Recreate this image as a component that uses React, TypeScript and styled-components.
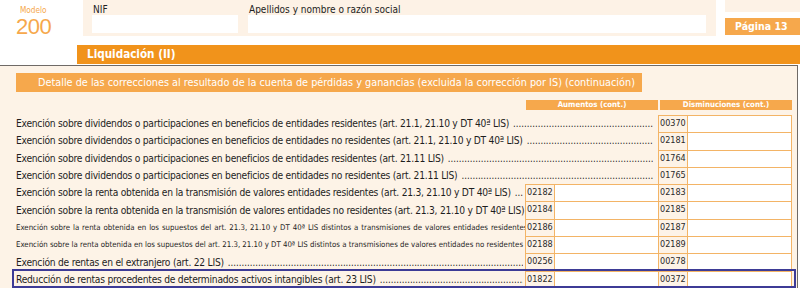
import React from "react";
import styled, { createGlobalStyle } from "styled-components";

const Global = createGlobalStyle`
  html, body { margin: 0; padding: 0; background: #ffffff; }
  body { font-family: "DejaVu Sans Condensed", "DejaVu Sans", "Liberation Sans", sans-serif; }
  * { box-sizing: border-box; }
`;

const ORANGE = "#f1931b";
const LIGHT_ORANGE = "#f6a84c";
const PEACH = "#fdf3e7";
const BOX_BORDER = "#f3b466";
const ROW_H = 17.3;

const Page = styled.div`
  width: 800px;
  height: 288px;
  overflow: hidden;
  background: #fff;
  position: relative;
`;

const Top = styled.div`
  display: grid;
  grid-template-columns: 83px 633px 9px 75px;
  height: 45px;
`;

const ModelBox = styled.div`
  display: flex;
  flex-direction: column;
  align-items: flex-start;
  padding-left: 16px;
  padding-top: 5px;
  color: ${LIGHT_ORANGE};
`;

const ModelLabel = styled.div`
  font-size: 8.2px;
  line-height: 10px;
  padding-left: 4px;
`;

const ModelNumber = styled.div`
  font-family: "Liberation Sans", Arial, sans-serif;
  font-size: 22px;
  line-height: 22px;
  font-weight: 300;
  letter-spacing: -0.5px;
  margin-top: 1px;
`;

const IdPanel = styled.div`
  height: 36px;
  background: #fdf2e6;
  display: grid;
  grid-template-columns: 146px 458px;
  column-gap: 10px;
  padding: 4px 0 0 9px;
`;

const Field = styled.div`
  display: flex;
  flex-direction: column;
`;

const FieldLabel = styled.div`
  font-size: 10px;
  line-height: 11px;
  color: #222;
  padding-left: 1px;
`;

const FieldInput = styled.div`
  background: #fff;
  height: 18px;
`;

const RightCol = styled.div`
  grid-column: 4;
  display: flex;
  flex-direction: column;
  gap: 6px;
`;

const FadedBox = styled.div`
  height: 12px;
  background: #fdf2e6;
`;

const PageTag = styled.div`
  height: 17px;
  background: ${LIGHT_ORANGE};
  color: #fff;
  font-weight: bold;
  font-size: 10.5px;
  line-height: 17px;
  padding-left: 10px;
`;

const SectionBar = styled.div`
  margin-left: 77px;
  height: 19px;
  background: ${ORANGE};
  color: #fff;
  font-weight: bold;
  font-size: 11.6px;
  line-height: 19px;
  padding-left: 10px;
`;

const Frame = styled.div`
  margin-top: 1px;
  width: 798px;
  height: 240px;
  border-top: 1px solid #6f6a66;
  border-right: 1px solid #6f6a66;
  background: ${PEACH};
  padding: 7px 5px 0 0;
`;

const DetailBar = styled.div`
  margin-left: 16px;
  width: 626px;
  height: 19px;
  background: ${LIGHT_ORANGE};
  color: #fff;
  font-size: 10.8px;
  line-height: 19px;
  padding-left: 22px;
  white-space: nowrap;
`;

const Table = styled.div`
  margin-top: 8px;
  display: grid;
  grid-template-columns: 1fr 133px 133px;
  padding-left: 16px;
`;

const ColHead = styled.div<{ $col: number }>`
  grid-column: ${(p) => p.$col};
  height: 10px;
  margin-left: ${(p) => (p.$col === 3 ? "1px" : "0")};
  margin-right: ${(p) => (p.$col === 2 ? "1px" : "0")};
  background: ${LIGHT_ORANGE};
  color: #fff;
  font-weight: bold;
  font-size: 7.8px;
  line-height: 10px;
  text-align: center;
  margin-bottom: 5px;
`;

const Label = styled.div<{ $wide: boolean; $small: boolean; $words: number }>`
  grid-column: ${(p) => (p.$wide ? "1 / 3" : "1")};
  height: ${ROW_H}px;
  display: flex;
  align-items: center;
  overflow: hidden;
  white-space: nowrap;
  font-size: ${(p) => (p.$small ? "7.8px" : "10.2px")};
  letter-spacing: ${(p) => (p.$small ? "0" : "-0.25px")};
  word-spacing: ${(p) => p.$words}px;
  color: #1e1e1e;
  padding-right: ${(p) => (p.$wide ? "6px" : "3px")};
`;

const LabelText = styled.span`
  flex: none;
`;

const Dots = styled.span`
  flex: 1;
  overflow: hidden;
  margin-left: 4px;
  letter-spacing: 0;
  font-size: 9.6px;
  padding-right: 2px;
  &::before {
    content: "..................................................................................................................................................................................................................";
  }
`;

const Entry = styled.div<{ $col: number }>`
  grid-column: ${(p) => p.$col};
  height: ${ROW_H + 1}px;
  display: grid;
  grid-template-columns: 29px 1fr;
  border: 1px solid ${BOX_BORDER};
  margin-bottom: -1px;
  margin-left: -1px;
`;

const Code = styled.div`
  border-right: 1px solid ${BOX_BORDER};
  font-size: 9px;
  line-height: 15px;
  color: #2a2a2a;
  padding-left: 1px;
`;

const Input = styled.div`
  background: #fff;
`;

const Highlight = styled.div`
  position: absolute;
  left: 12px;
  top: 269px;
  width: 784px;
  height: 19px;
  border: 2px solid #3d3b96;
  pointer-events: none;
`;

type Row = { label: string; aum?: string; dis: string; small?: boolean; words?: number; dots?: boolean };

const rows: Row[] = [
  { label: "Exención sobre dividendos o participaciones en beneficios de entidades residentes (art. 21.1, 21.10 y DT 40ª LIS)", dis: "00370", dots: true },
  { label: "Exención sobre dividendos o participaciones en beneficios de entidades no residentes (art. 21.1, 21.10 y DT 40ª LIS)", dis: "02181", dots: true },
  { label: "Exención sobre dividendos o participaciones en beneficios de entidades residentes (art. 21.11 LIS)", dis: "01764", dots: true },
  { label: "Exención sobre dividendos o participaciones en beneficios de entidades no residentes (art. 21.11 LIS)", dis: "01765", dots: true },
  { label: "Exención sobre la renta obtenida en la transmisión de valores entidades residentes (art. 21.3, 21.10 y DT 40ª LIS)", aum: "02182", dis: "02183", dots: true },
  { label: "Exención sobre la renta obtenida en la transmisión de valores entidades no residentes (art. 21.3, 21.10 y DT 40ª LIS)", aum: "02184", dis: "02185", dots: true },
  { label: "Exención sobre la renta obtenida en los supuestos del art. 21.3, 21.10 y DT 40ª LIS distintos a transmisiones de valores entidades residentes", aum: "02186", dis: "02187", small: true, words: 0.7 },
  { label: "Exención sobre la renta obtenida en los supuestos del art. 21.3, 21.10 y DT 40ª LIS distintos a transmisiones de valores entidades no residentes", aum: "02188", dis: "02189", small: true, words: 0 },
  { label: "Exención de rentas en el extranjero (art. 22 LIS)", aum: "00256", dis: "00278", dots: true },
  { label: "Reducción de rentas procedentes de determinados activos intangibles (art. 23 LIS)", aum: "01822", dis: "00372", dots: true },
];

export default function App() {
  return (
    <Page>
      <Global />
      <Top>
        <ModelBox>
          <ModelLabel>Modelo</ModelLabel>
          <ModelNumber>200</ModelNumber>
        </ModelBox>
        <IdPanel>
          <Field>
            <FieldLabel>NIF</FieldLabel>
            <FieldInput />
          </Field>
          <Field>
            <FieldLabel>Apellidos y nombre o razón social</FieldLabel>
            <FieldInput />
          </Field>
        </IdPanel>
        <RightCol>
          <FadedBox />
          <PageTag>Página 13</PageTag>
        </RightCol>
      </Top>
      <SectionBar>Liquidación (II)</SectionBar>
      <Frame>
        <DetailBar>
          Detalle de las correcciones al resultado de la cuenta de pérdidas y ganancias (excluida la corrección por IS) (continuación)
        </DetailBar>
        <Table>
          <ColHead $col={2}>Aumentos (cont.)</ColHead>
          <ColHead $col={3}>Disminuciones (cont.)</ColHead>
          {rows.map((r) => (
            <React.Fragment key={r.dis}>
              <Label $wide={!r.aum} $small={!!r.small} $words={r.words ?? 0}>
                <LabelText>{r.label}</LabelText>
                {r.dots && <Dots />}
              </Label>
              {r.aum && (
                <Entry $col={2}>
                  <Code>{r.aum}</Code>
                  <Input />
                </Entry>
              )}
              <Entry $col={3}>
                <Code>{r.dis}</Code>
                <Input />
              </Entry>
            </React.Fragment>
          ))}
        </Table>
      </Frame>
      <Highlight />
    </Page>
  );
}
